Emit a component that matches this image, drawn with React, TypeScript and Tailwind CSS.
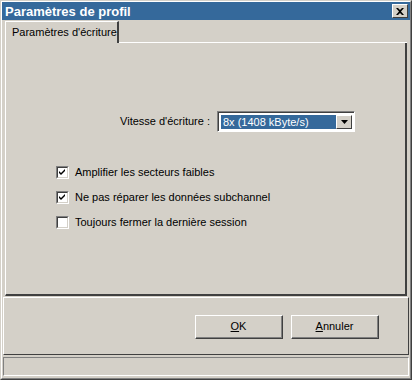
import React from "react";

const font = { fontFamily: '"Liberation Sans", Arial, sans-serif' };

function Check({ checked, label }: { checked: boolean; label: string }) {
  return (
    <div className="flex items-center h-[13px]">
      <div className="w-[13px] h-[13px] border-t border-l border-t-[#808080] border-l-[#808080] border-b border-r border-b-white border-r-white">
        <div className="w-[11px] h-[11px] bg-white border-t border-l border-t-[#404040] border-l-[#404040] border-b border-r border-b-[#d4d0c8] border-r-[#d4d0c8] flex items-center justify-center">
          {checked && (
            <svg width="7" height="7" viewBox="0 0 7 7">
              <path d="M0 2 L2 4 L6 0 L6 2 L2 6 L0 4 Z" fill="#000" />
            </svg>
          )}
        </div>
      </div>
      <span className="ml-[6px] text-[11px] text-black leading-none">{label}</span>
    </div>
  );
}

function Btn({ u, rest }: { u: string; rest: string }) {
  return (
    <div className="w-[88px] h-[24px] border-t border-l border-t-white border-l-white border-b border-r border-b-[#404040] border-r-[#404040]">
      <div className="w-full h-full border-b border-r border-b-[#808080] border-r-[#808080] flex items-center justify-center text-[11px] text-black">
        <span>
          <span className="underline">{u}</span>
          {rest}
        </span>
      </div>
    </div>
  );
}

export default function App() {
  return (
    <div style={font} className="w-[412px] h-[380px] bg-[#d4d0c8] border border-t-[#d4d0c8] border-l-[#d4d0c8] border-b-[#404040] border-r-[#404040]">
      <div className="w-full h-full border border-t-white border-l-white border-b-[#808080] border-r-[#808080] flex flex-col">
        {/* Title bar */}
        <div className="h-[18px] bg-[#35699b] flex items-center justify-between pl-[3px] pr-[2px]">
          <span className="text-white font-bold text-[13px] leading-none">Paramètres de profil</span>
          <div className="w-[16px] h-[14px] bg-[#d4d0c8] border-t border-l border-t-white border-l-white border-b border-r border-b-[#404040] border-r-[#404040] flex items-center justify-center">
            <svg width="8" height="7" viewBox="0 0 8 7">
              <path d="M0 0 L2 0 L4 2 L6 0 L8 0 L5 3.5 L8 7 L6 7 L4 5 L2 7 L0 7 L3 3.5 Z" fill="#000" />
            </svg>
          </div>
        </div>

        {/* Tabs */}
        <div className="mt-[1px] px-[3px] flex">
          <div className="h-[22px] w-[114px] border-t border-l border-t-white border-l-white border-r-2 border-r-[#404040] flex items-center pl-[6px] text-[11px] text-black">
            Paramètres d'écriture
          </div>
          <div className="flex-1 border-b border-b-white" />
        </div>
        <div className="mx-[3px] h-[253px] border-l border-l-white border-r-2 border-r-[#404040] border-b-2 border-b-[#404040] flex flex-col">
          <div className="mt-[68px] flex justify-end items-center pr-[50px]">
            <span className="text-[11px] text-black mr-[7px]">Vitesse d'écriture :</span>
            <div className="w-[138px] h-[21px] bg-white border-t border-l border-t-[#808080] border-l-[#808080] border-b border-r border-b-white border-r-white">
              <div className="w-full h-full border-t border-l border-t-[#404040] border-l-[#404040] flex items-center p-[2px]">
                <div className="flex-1 h-full bg-[#35699b] text-white text-[11px] flex items-center pl-[2px]">8x (1408 kByte/s)</div>
                <div className="w-[16px] h-full bg-[#d4d0c8] border-t border-l border-t-white border-l-white border-b border-r border-b-[#404040] border-r-[#404040] flex items-center justify-center">
                  <svg width="7" height="4" viewBox="0 0 7 4">
                    <path d="M0 0 L7 0 L3.5 4 Z" fill="#000" />
                  </svg>
                </div>
              </div>
            </div>
          </div>
          <div className="mt-[34px] pl-[50px] flex flex-col gap-[12px]">
            <Check checked label="Amplifier les secteurs faibles" />
            <Check checked label="Ne pas réparer les données subchannel" />
            <Check checked={false} label="Toujours fermer la dernière session" />
          </div>
        </div>

        {/* Buttons area */}
        <div className="mt-[1px] mx-[1px] h-[58px] border-t border-l border-t-white border-l-white border-b border-r border-b-[#404040] border-r-[#404040] flex justify-end items-start pt-[17px] pr-[29px] gap-[8px]">
          <Btn u="O" rest="K" />
          <Btn u="A" rest="nnuler" />
        </div>

        {/* Status bar */}
        <div className="mt-[2px] mx-[1px] h-[19px] border-t border-l border-t-[#808080] border-l-[#808080] border-b border-r border-b-white border-r-white" />
      </div>
    </div>
  );
}
